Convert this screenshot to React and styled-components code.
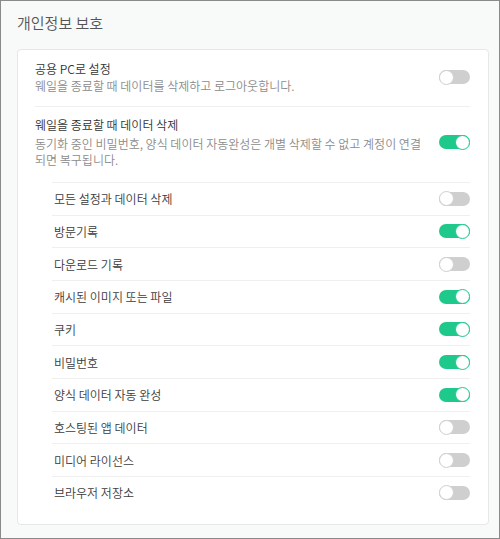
import React from "react";
import styled, { createGlobalStyle } from "styled-components";

const Global = createGlobalStyle`
  html, body { margin: 0; padding: 0; }
  body { font-family: "Noto Sans CJK KR", "Noto Sans", sans-serif; }
  * { box-sizing: border-box; }
`;

const Frame = styled.div`
  width: 500px;
  height: 539px;
  border: 1px solid #8a8a8a;
  background: #f8f9f9;
  padding: 12px 11px 0 16px;
  display: flex;
  flex-direction: column;
`;

const Title = styled.h1`
  margin: 0;
  font-size: 15px;
  line-height: 20px;
  font-weight: 350;
  color: #555;
`;

const Card = styled.section`
  margin-top: 16px;
  width: 472px;
  background: #fff;
  border: 1px solid #e6e7e7;
  border-radius: 4px;
  padding: 0 18px 15px 17px;
`;

const Row = styled.div`
  display: flex;
  align-items: center;
  gap: 14px;
  padding: ${(p) => p.$pad || "9px 0 12px"};
  border-top: ${(p) => (p.$divider ? "1px solid #efefef" : "none")};
`;

const TextCol = styled.div`
  flex: 1;
  min-width: 0;
`;

const RowTitle = styled.div`
  font-size: 12px;
  line-height: 18px;
  font-weight: 350;
  color: #333;
`;

const RowDesc = styled.div`
  font-size: 12px;
  line-height: 16px;
  font-weight: 350;
  color: #8c8c8c;
  margin-top: ${(p) => p.$mt || "0"};
`;

const SubList = styled.div`
  margin-left: 17px;
`;

const SubRow = styled.div`
  display: flex;
  align-items: center;
  justify-content: space-between;
  height: 32.67px;
  border-top: 1px solid #efefef;
  padding-left: 2px;
`;

const SubLabel = styled.span`
  font-size: 12px;
  font-weight: 350;
  color: #3c3c3c;
`;

const Track = styled.span`
  position: relative;
  display: inline-block;
  flex: none;
  width: 31px;
  height: 14px;
  border-radius: 7px;
  background: ${(p) => (p.$on ? "#1ec98b" : "#cfcfcf")};
`;

const Knob = styled.span`
  position: absolute;
  top: -0.5px;
  left: ${(p) => (p.$on ? "16px" : "0")};
  width: 15px;
  height: 15px;
  border-radius: 50%;
  background: #fff;
  border: 1.5px solid ${(p) => (p.$on ? "#1ec98b" : "#cfcfcf")};
`;

const Toggle = ({ on }) => (
  <Track $on={on}>
    <Knob $on={on} />
  </Track>
);

const items = [
  ["모든 설정과 데이터 삭제", false],
  ["방문기록", true],
  ["다운로드 기록", false],
  ["캐시된 이미지 또는 파일", true],
  ["쿠키", true],
  ["비밀번호", true],
  ["양식 데이터 자동 완성", true],
  ["호스팅된 앱 데이터", false],
  ["미디어 라이선스", false],
  ["브라우저 저장소", false],
];

export default function App() {
  return (
    <>
      <Global />
      <Frame>
        <Title>개인정보 보호</Title>
        <Card>
          <Row $pad="10px 0 12px">
            <TextCol>
              <RowTitle>공용 PC로 설정</RowTitle>
              <RowDesc>웨일을 종료할 때 데이터를 삭제하고 로그아웃합니다.</RowDesc>
            </TextCol>
            <Toggle on={false} />
          </Row>
          <Row $divider $pad="9px 0 14px">
            <TextCol>
              <RowTitle>웨일을 종료할 때 데이터 삭제</RowTitle>
              <RowDesc $mt="2px">
                동기화 중인 비밀번호, 양식 데이터 자동완성은 개별 삭제할 수 없고 계정이 연결되면 복구됩니다.
              </RowDesc>
            </TextCol>
            <Toggle on={true} />
          </Row>
          <SubList>
            {items.map(([label, on]) => (
              <SubRow key={label}>
                <SubLabel>{label}</SubLabel>
                <Toggle on={on} />
              </SubRow>
            ))}
          </SubList>
        </Card>
      </Frame>
    </>
  );
}
